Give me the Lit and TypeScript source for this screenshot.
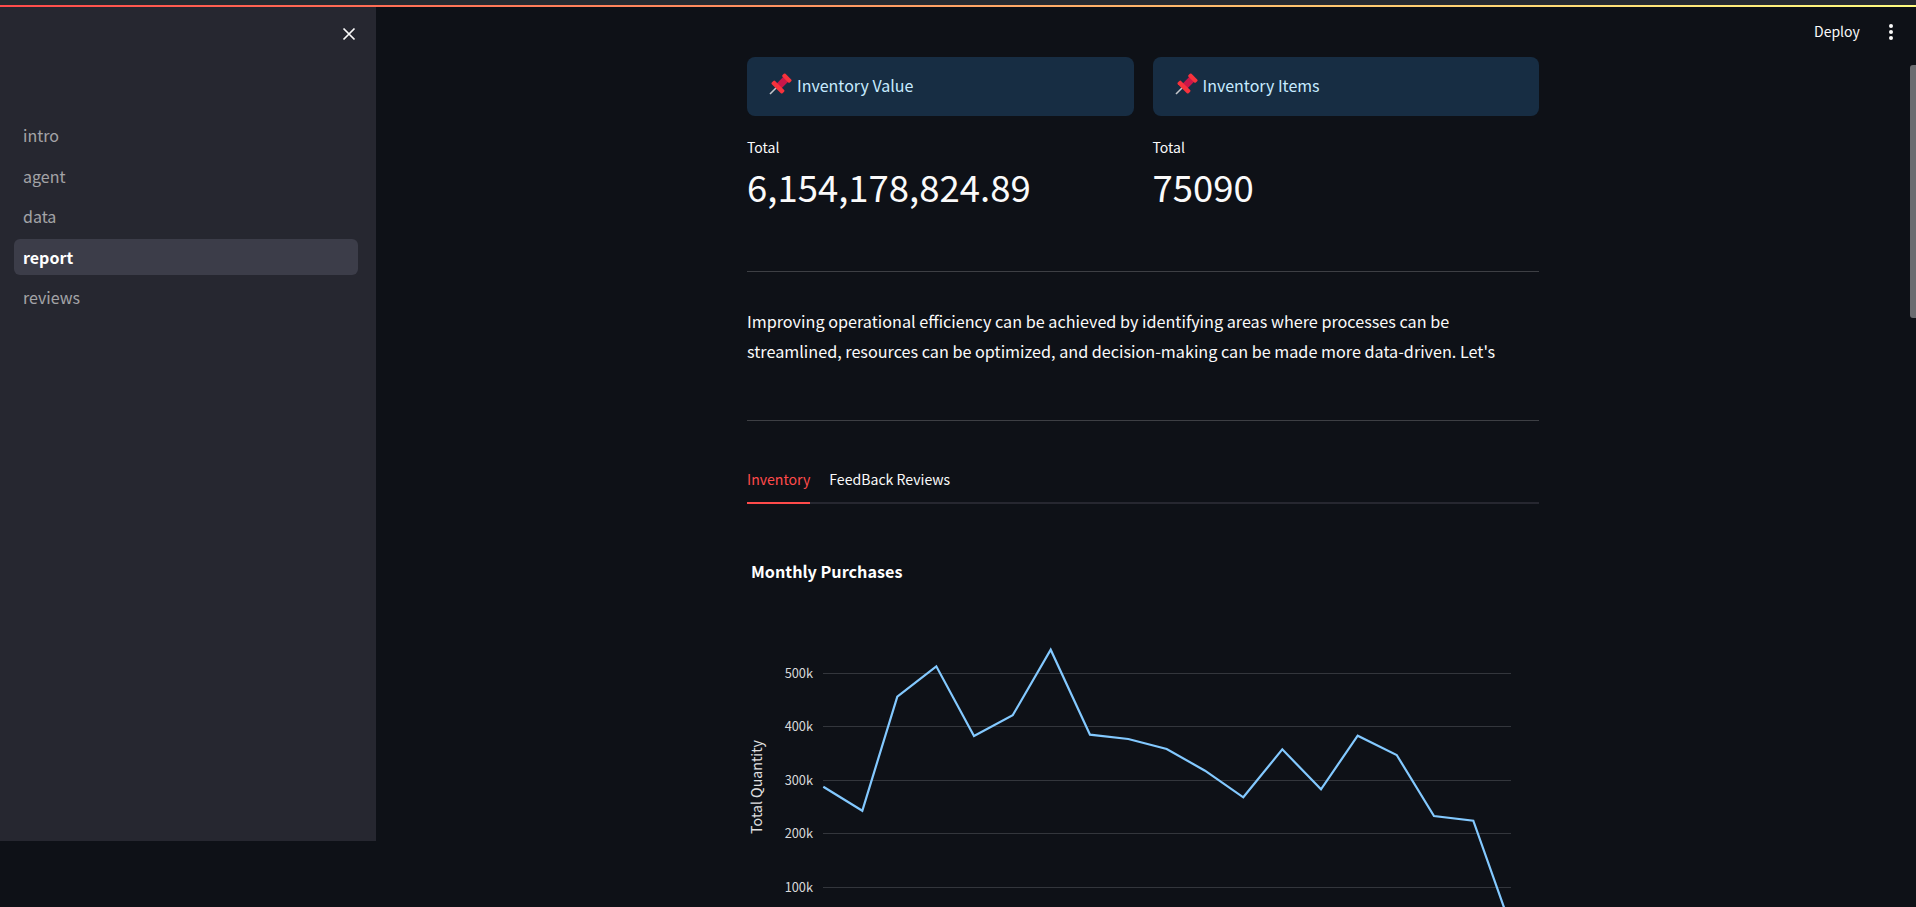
import { LitElement, html, css, svg } from "lit";
import { customElement } from "lit/decorators.js";

const NAV = ["intro", "agent", "data", "report", "reviews"];
const ACTIVE = "report";

// chart geometry read off the reference, in svg coordinates
const GRID = [
  { label: "500k", y: 120.5 },
  { label: "400k", y: 173.5 },
  { label: "300k", y: 227.5 },
  { label: "200k", y: 280.5 },
  { label: "100k", y: 334.5 },
];
const LINE = [
  [76.3, 233.7], [115.3, 257.7], [150.3, 143.7], [189.3, 113.3], [227, 183],
  [265.7, 162.3], [303.7, 96.7], [343, 181.7], [381.3, 186], [419.7, 196],
  [458, 217.7], [496.3, 244.3], [535.3, 196.3], [574, 236.3], [610.7, 182.7],
  [649.7, 202], [687, 263], [726.3, 267.7], [765, 377],
];

@customElement("app-root")
export class AppRoot extends LitElement {
  static styles = css`
    :host {
      display: block;
      height: 907px;
      overflow: hidden;
      position: relative;
      background: #0e1117;
      color: #fafafa;
      font-family: "Noto Sans CJK SC", "Source Sans Pro", "Noto Sans", sans-serif;
    }
    .topstrip {
      height: 5px;
      background: #262a30;
    }
    .decoration {
      height: 2px;
      background: linear-gradient(90deg, #ff4b4b, #fffd80);
    }
    .shell {
      display: flex;
      align-items: flex-start;
    }
    .sidebar {
      width: 376px;
      height: 834px;
      flex: none;
      background: #262730;
      box-sizing: border-box;
      padding: 110px 18px 0 14px;
    }
    .close {
      position: absolute;
      left: 342px;
      top: 27px;
      width: 14px;
      height: 14px;
    }
    .nav {
      display: flex;
      flex-direction: column;
      gap: 4.5px;
    }
    .nav a {
      display: block;
      height: 36px;
      line-height: 36px;
      padding-left: 9px;
      border-radius: 6px;
      font-size: 16px;
      color: rgba(250, 250, 250, 0.6);
    }
    .nav a.active {
      background: #3c3d49;
      color: #fff;
      font-weight: 700;
    }
    .main {
      flex: 1;
      display: flex;
      justify-content: center;
      padding-right: 6px;
      padding-top: 50px;
    }
    .block {
      width: 792px;
    }
    .cols {
      display: grid;
      grid-template-columns: 1fr 1fr;
      column-gap: 19px;
    }
    .card {
      height: 59px;
      box-sizing: border-box;
      padding: 0 0 3px 22px;
      background: #172d43;
      border-radius: 8px;
      color: #c7ebff;
      font-size: 16px;
      display: flex;
      align-items: center;
      gap: 4px;
    }
    .pin {
      width: 24px;
      height: 24px;
      flex: none;
    }
    .metric {
      margin-top: 19px;
    }
    .metric-label {
      font-size: 14px;
      line-height: 24px;
    }
    .metric-value {
      font-size: 36.5px;
      line-height: 56px;
    }
    hr {
      border: 0;
      height: 1px;
      background: rgba(250, 250, 250, 0.2);
      margin: 0;
    }
    .rule-a {
      margin-top: 56px;
    }
    .summary {
      font-size: 16.2px;
      line-height: 29.5px;
      margin: 35px 0 0;
      width: 770px;
      height: 113px;
    }
    .tabs {
      display: flex;
      gap: 19px;
      margin-top: 39px;
      height: 42px;
      border-bottom: 2px solid #262730;
    }
    .tab {
      font-size: 14.1px;
      line-height: 38px;
      height: 42px;
      color: #fafafa;
    }
    .tab.active {
      color: #ff4b4b;
      border-bottom: 2px solid #ff4b4b;
    }
    .chart {
      display: block;
      margin-top: 49px;
      width: 792px;
      height: 410px;
    }
    .chart-title {
      font-size: 16.2px;
      font-weight: 700;
      fill: #fff;
    }
    .tick {
      font-size: 12.8px;
      fill: #d8d9da;
    }
    .axis-title {
      font-size: 14.2px;
      fill: #e0e0e1;
    }
    .deploy {
      position: absolute;
      left: 1814px;
      top: 19px;
      font-size: 14px;
      line-height: 24px;
    }
    .menu {
      position: absolute;
      left: 1887px;
      top: 24px;
      width: 8px;
      height: 16px;
    }
    .thumb {
      position: absolute;
      left: 1910px;
      top: 65px;
      width: 6px;
      height: 253px;
      border-radius: 3px 0 0 3px;
      background: #6b6c70;
    }
  `;

  renderPin() {
    return html`<svg class="pin" viewBox="0 0 24 24">
      <path d="M1 21 9 13" stroke="#c4c7cb" stroke-width="1.6" fill="none" />
      <g transform="rotate(45 13 10)">
        <rect x="9.6" y="4" width="6.8" height="11" fill="#c9174a" />
        <rect x="7.8" y="1" width="10.4" height="4.2" rx="1.2" fill="#f7323c" />
        <rect x="5.4" y="13.4" width="15.2" height="4.6" rx="1.2" fill="#f7323c" />
      </g>
    </svg>`;
  }

  renderChart() {
    const points = LINE.map((p) => p.join(",")).join(" ");
    return html`<svg class="chart" viewBox="0 0 792 410">
      <text class="chart-title" x="4" y="25">Monthly Purchases</text>
      ${GRID.map(
        (g) => svg`
          <line x1="76" x2="764" y1=${g.y} y2=${g.y} stroke="#33363c" stroke-width="1" />
          <text class="tick" x="66" y=${g.y + 4.5} text-anchor="end">${g.label}</text>
        `
      )}
      <polyline points=${points} fill="none" stroke="#83c9ff" stroke-width="2.2" />
      <text class="axis-title" transform="translate(15 234) rotate(-90)" text-anchor="middle">Total Quantity</text>
    </svg>`;
  }

  render() {
    return html`
      <div class="topstrip"></div>
      <div class="decoration"></div>
      <div class="shell">
        <aside class="sidebar">
          <nav class="nav">
            ${NAV.map((n) => html`<a class=${n === ACTIVE ? "active" : ""}>${n}</a>`)}
          </nav>
        </aside>
        <main class="main">
          <div class="block">
            <div class="cols">
              <div class="card">${this.renderPin()}<span>Inventory Value</span></div>
              <div class="card">${this.renderPin()}<span>Inventory Items</span></div>
            </div>
            <div class="cols metric">
              <div>
                <div class="metric-label">Total</div>
                <div class="metric-value">6,154,178,824.89</div>
              </div>
              <div>
                <div class="metric-label">Total</div>
                <div class="metric-value">75090</div>
              </div>
            </div>
            <hr class="rule-a" />
            <p class="summary">
              Improving operational efficiency can be achieved by identifying areas where processes can be
              streamlined, resources can be optimized, and decision-making can be made more data-driven. Let's
            </p>
            <hr />
            <div class="tabs">
              <div class="tab active">Inventory</div>
              <div class="tab">FeedBack Reviews</div>
            </div>
            ${this.renderChart()}
          </div>
        </main>
      </div>
      <svg class="close" viewBox="0 0 14 14">
        <path d="M1.5 1.5 12.5 12.5M12.5 1.5 1.5 12.5" stroke="#fafafa" stroke-width="1.7" fill="none" />
      </svg>
      <div class="deploy">Deploy</div>
      <svg class="menu" viewBox="0 0 8 16">
        <circle cx="4" cy="2" r="2" fill="#fafafa" />
        <circle cx="4" cy="8" r="2" fill="#fafafa" />
        <circle cx="4" cy="14" r="2" fill="#fafafa" />
      </svg>
      <div class="thumb"></div>
    `;
  }
}
